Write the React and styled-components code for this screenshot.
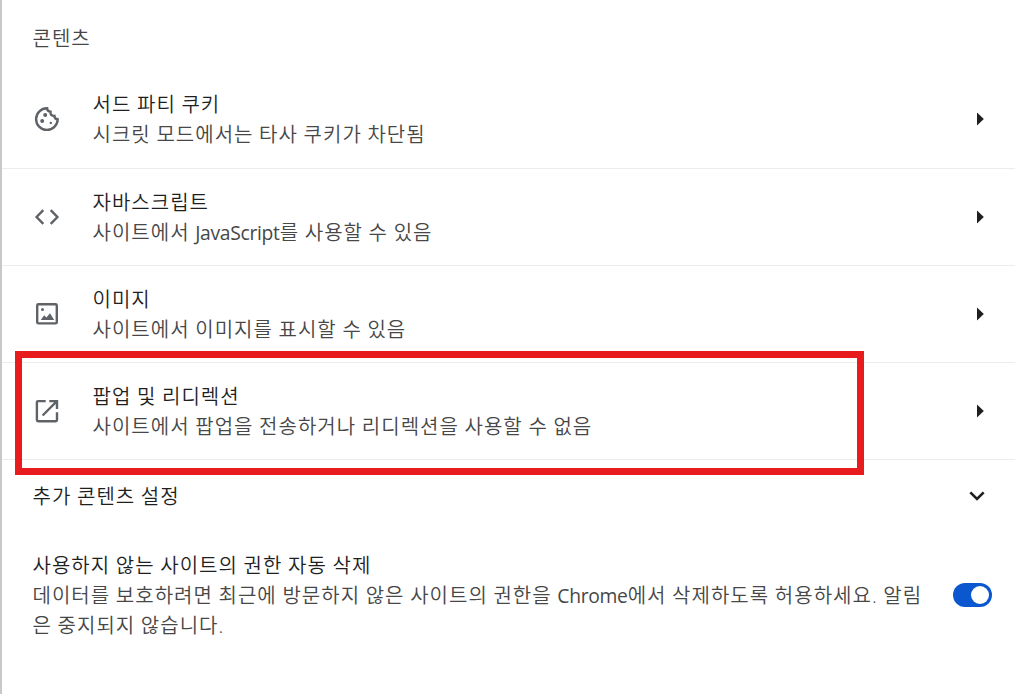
import React from 'react';
import styled, { createGlobalStyle } from 'styled-components';

const icons = {
    cookie: (
        <>
            <path d="M15.1 4.3A10.8 10.8 0 1 0 25.7 15.3C23.8 15.2 22.5 13.8 22.4 11.9C19.7 12.1 18.1 10.2 18.5 7.8C16.4 7.6 15.1 6.2 15.1 4.3Z" />
            <g fill="currentColor" stroke="none">
                <circle cx="13.2" cy="10.9" r="2" />
                <circle cx="10.2" cy="16.9" r="2" />
                <circle cx="18.8" cy="18.9" r="1.2" />
            </g>
        </>
    ),
    code: <path d="M11.3 8.2L4.6 15L11.3 21.8M18.7 8.2L25.4 15L18.7 21.8" />,
    image: (
        <>
            <rect x="5.2" y="5.2" width="19.6" height="19.2" rx="1.2" />
            <circle cx="10.5" cy="10.5" r="1.5" fill="currentColor" stroke="none" />
            <path d="M8.7 21L12.2 16.2L14.4 18.6L18 14.2L22.2 21Z" fill="currentColor" stroke="none" />
        </>
    ),
    popup: (
        <path d="M13.7 5.1H6.1Q4.9 5.1 4.9 6.3V24Q4.9 25.2 6.1 25.2H23.8Q25 25.2 25 24V16.3M17.3 5.1H25V13M24.7 5.4L10.6 19.5" />
    ),
};

const App = () => (
    <Page>
        <GlobalStyle />
        <Heading>콘텐츠</Heading>
        {rows.map(row => (
            <Row key={row.icon}>
                <Icon viewBox="0 0 30 30">{icons[row.icon]}</Icon>
                <Texts>
                    <Title>{row.title}</Title>
                    <Description>{row.text}</Description>
                </Texts>
                <Arrow viewBox="0 0 7 14"><path d="M0 0.5L6.8 7L0 13.5Z" /></Arrow>
                {row.marked && <Marker />}
            </Row>
        ))}
        <MoreRow>
            <Title>추가 콘텐츠 설정</Title>
            <Chevron viewBox="0 0 16 10"><path d="M1.3 1.4L8 8L14.7 1.4" /></Chevron>
        </MoreRow>
        <PermissionRow>
            <Texts>
                <Title>사용하지 않는 사이트의 권한 자동 삭제</Title>
                <Description>
                    데이터를 보호하려면 최근에 방문하지 않은 사이트의 권한을 <Latin>Chrome</Latin>에서 삭제하도록 허용하세요. 알림은 중지되지 않습니다.
                </Description>
            </Texts>
            <Toggle role="switch" aria-checked="true"><Knob /></Toggle>
        </PermissionRow>
    </Page>
)

const GlobalStyle = createGlobalStyle`
    * {
        box-sizing: border-box;
    }
    body {
        margin: 0;
        background: #fff;
    }
`;

const Page = styled.main`
    height: 694px;
    overflow: hidden;
    border-left: 2px solid #c8c8c8;
    color: #1f1f1f;
    font-family: "Open Sans", "Noto Sans CJK KR", sans-serif;
    font-size: 20px;
    font-weight: 350;
    line-height: 30px;
    letter-spacing: 1.02px;
    word-spacing: -0.6px;
`;

const Heading = styled.div`
    height: 72px;
    padding: 24px 31px 0 30.5px;
    color: #474747;
`;

const Row = styled.div`
    position: relative;
    display: flex;
    align-items: center;
    height: 97px;
    padding: 0 31px 0 30px;
    border-bottom: 1px solid #ececec;

    &:nth-of-type(2) {
        padding-bottom: 2px;
    }
`;

const Icon = styled.svg`
    flex: none;
    width: 30px;
    height: 30px;
    margin-right: 30.5px;
    color: #5f6368;
    fill: none;
    stroke: currentColor;
    stroke-width: 2.4;
`;

const Texts = styled.div`
    flex: 1;
    padding-top: 2px;
`;

const Title = styled.div`
    color: #1f1f1f;
`;

const Description = styled.div`
    color: #474747;
    word-break: break-all;
`;

const Latin = styled.span`
    font-size: 19.3px;
    font-weight: 400;
    letter-spacing: -0.3px;
`;

const Arrow = styled.svg`
    width: 7px;
    height: 14px;
    fill: #1f1f1f;
`;

const Marker = styled.div`
    position: absolute;
    top: -12px;
    left: 13px;
    width: 849px;
    height: 124px;
    border: 7px solid #e81c1c;
    pointer-events: none;
`;

const MoreRow = styled.div`
    display: flex;
    align-items: center;
    justify-content: space-between;
    height: 72px;
    padding: 0 30px 0 30.5px;

    ${Title} {
        padding-top: 2px;
    }
`;

const Chevron = styled.svg`
    width: 16px;
    height: 10px;
    fill: none;
    stroke: #1f1f1f;
    stroke-width: 2.6;
`;

const PermissionRow = styled.div`
    display: flex;
    align-items: center;
    padding: 17px 23px 0 30.5px;
`;

const Toggle = styled.div`
    display: flex;
    align-items: center;
    justify-content: flex-end;
    width: 39px;
    height: 24px;
    margin-left: 30px;
    padding-right: 3px;
    border-radius: 12px;
    background: #0b57d0;
`;

const Knob = styled.span`
    width: 18px;
    height: 18px;
    border-radius: 50%;
    background: #fff;
`;

const rows = [
    { icon: 'cookie', title: '서드 파티 쿠키', text: '시크릿 모드에서는 타사 쿠키가 차단됨' },
    { icon: 'code', title: '자바스크립트', text: <>사이트에서 <Latin>JavaScript</Latin>를 사용할 수 있음</> },
    { icon: 'image', title: '이미지', text: '사이트에서 이미지를 표시할 수 있음' },
    { icon: 'popup', title: '팝업 및 리디렉션', text: '사이트에서 팝업을 전송하거나 리디렉션을 사용할 수 없음', marked: true },
];

export default App;
